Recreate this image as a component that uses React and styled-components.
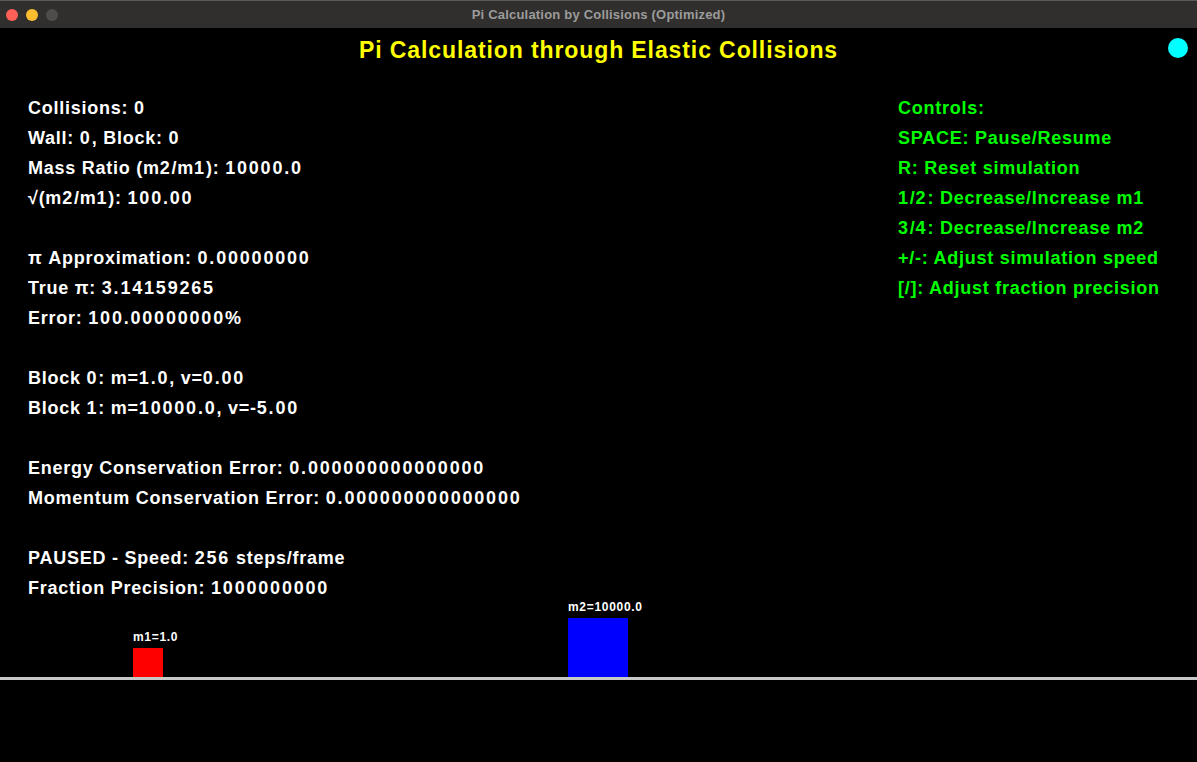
import React from "react"
import styled, { createGlobalStyle } from "styled-components"

const GlobalStyle = createGlobalStyle`
  html, body {
    margin: 0;
    padding: 0;
    background: #000;
  }
  body {
    font-family: "Liberation Sans", Arial, sans-serif;
  }
`

const Window = styled.div`
  width: 1197px;
  height: 762px;
  display: flex;
  flex-direction: column;
  overflow: hidden;
  background: #000;
`

const TitleBar = styled.header`
  height: 28px;
  box-sizing: border-box;
  flex: none;
  display: grid;
  grid-template-columns: 1fr auto 1fr;
  align-items: center;
  padding: 0 6px;
  background: #302f2d;
  border-top: 1px solid #5b5a58;
`

const Lights = styled.div`
  display: flex;
  gap: 8px;
`

const Light = styled.span`
  width: 12px;
  height: 12px;
  border-radius: 50%;
  background: ${props => props.color};
`

const WindowTitle = styled.div`
  font-size: 13px;
  font-weight: 700;
  letter-spacing: 0.2px;
  color: #9c9c9c;
`

const Canvas = styled.main`
  flex: 1;
  display: flex;
  flex-direction: column;
  padding-top: 7px;
  color: #fff;
`

const Header = styled.div`
  display: grid;
  grid-template-columns: 1fr auto 1fr;
`

const Heading = styled.h1`
  grid-column: 2;
  margin: 0;
  font-size: 23px;
  line-height: 30px;
  font-weight: 700;
  letter-spacing: 0.9px;
  color: #ffff00;
`

const Indicator = styled.span`
  justify-self: end;
  align-self: start;
  width: 20px;
  height: 20px;
  margin: 3px 9px 0 0;
  border-radius: 50%;
  background: #00ffff;
`

const Body = styled.div`
  display: flex;
  margin-top: 28px;
  padding-left: 28px;
`

const Column = styled.div`
  flex: ${props => (props.width ? "none" : "1")};
  width: ${props => (props.width ? `${props.width}px` : "auto")};
  color: ${props => props.color || "#fff"};
`

const Line = styled.div`
  height: 30px;
  font-size: 18px;
  line-height: 30px;
  font-weight: 700;
  letter-spacing: 0.75px;
  white-space: nowrap;
`

// pygame's font sets digits a little looser than letters
const Num = styled.span`
  letter-spacing: 1.8px;
`

const Track = styled.div`
  position: relative;
  flex: none;
  height: 74px;
  border-bottom: 3px solid #c8c8c8;
`

const Block = styled.div`
  position: absolute;
  bottom: 0;
  left: ${props => props.x}px;
  width: ${props => props.size}px;
  height: ${props => props.size - 1}px;
  background: ${props => props.color};
`

const BlockLabel = styled.span`
  position: absolute;
  left: 0;
  bottom: calc(100% + 4px);
  font-size: 12px;
  line-height: 14px;
  font-weight: 700;
  letter-spacing: 0.7px;
  white-space: nowrap;
  color: #fff;
`

const stats = [
  "Collisions: 0",
  "Wall: 0, Block: 0",
  "Mass Ratio (m2/m1): 10000.0",
  "\u221A(m2/m1): 100.00",
  "",
  "\u03C0 Approximation: 0.00000000",
  "True \u03C0: 3.14159265",
  "Error: 100.00000000%",
  "",
  "Block 0: m=1.0, v=0.00",
  "Block 1: m=10000.0, v=-5.00",
  "",
  "Energy Conservation Error: 0.000000000000000",
  "Momentum Conservation Error: 0.000000000000000",
  "",
  "PAUSED - Speed: 256 steps/frame",
  "Fraction Precision: 1000000000",
]

const controls = [
  "Controls:",
  "SPACE: Pause/Resume",
  "R: Reset simulation",
  "1/2: Decrease/Increase m1",
  "3/4: Decrease/Increase m2",
  "+/-: Adjust simulation speed",
  "[/]: Adjust fraction precision",
]

const blocks = [
  { x: 133, size: 30, color: "#ff0000", label: "m1=1.0" },
  { x: 568, size: 60, color: "#0000ff", label: "m2=10000.0" },
]

function TextLine({ text }) {
  const parts = text.split(/(\d+(?:\.\d+)?)/)
  return (
    <Line>
      {parts.map((p, i) => (i % 2 ? <Num key={i}>{p}</Num> : p))}
    </Line>
  )
}

function App() {
  return (
    <Window>
      <GlobalStyle />
      <TitleBar>
        <Lights>
          <Light color="#fe5f57" />
          <Light color="#febc2e" />
          <Light color="#4e4d4b" />
        </Lights>
        <WindowTitle>Pi Calculation by Collisions (Optimized)</WindowTitle>
      </TitleBar>
      <Canvas>
        <Header>
          <Heading>Pi Calculation through Elastic Collisions</Heading>
          <Indicator />
        </Header>
        <Body>
          <Column>
            {stats.map((text, i) => (
              <TextLine key={i} text={text} />
            ))}
          </Column>
          <Column width={299} color="#00ff00">
            {controls.map(text => (
              <TextLine key={text} text={text} />
            ))}
          </Column>
        </Body>
        <Track>
          {blocks.map(b => (
            <Block key={b.label} x={b.x} size={b.size} color={b.color}>
              <BlockLabel>{b.label}</BlockLabel>
            </Block>
          ))}
        </Track>
      </Canvas>
    </Window>
  )
}

export default App
